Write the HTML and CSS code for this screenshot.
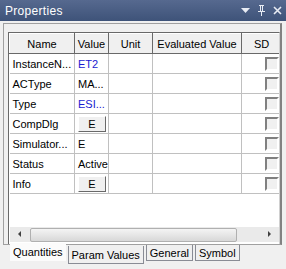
FILE: index.html
```html
<!DOCTYPE html>
<html lang="en">
<head>
    <meta charset="UTF-8">
    <title>Properties</title>
    <link rel="stylesheet" href="styles.css">
</head>
<body>
    <div class="titlebar">
        <span class="title">Properties</span>
        <div class="tools">
            <svg width="9" height="6" viewBox="0 0 9 6"><path d="M0 0h9L4.5 5z" fill="#e8ecf4"/></svg>
            <svg width="9" height="11" viewBox="0 0 9 11"><path d="M2 0h5v1H6v5h2v1H5v4H4V7H1V6h2V1H2z M4 1v5h1V1z" fill="#e8ecf4"/></svg>
            <svg width="9" height="9" viewBox="0 0 9 9"><path d="M1 1l7 7M8 1l-7 7" stroke="#e8ecf4" stroke-width="1.6"/></svg>
        </div>
    </div>

    <div class="frame">
        <div class="grid">
            <table>
                <thead>
                    <tr>
                        <th class="c-name">Name</th>
                        <th class="c-value">Value</th>
                        <th class="c-unit">Unit</th>
                        <th class="c-eval">Evaluated Value</th>
                        <th class="c-sd">SD</th>
                    </tr>
                </thead>
                <tbody>
                    <tr><td>InstanceN...</td><td class="blue">ET2</td><td></td><td></td><td class="chk"><span class="box"></span></td></tr>
                    <tr><td>ACType</td><td>MA...</td><td></td><td></td><td class="chk"><span class="box"></span></td></tr>
                    <tr><td>Type</td><td class="blue">ESI...</td><td></td><td></td><td class="chk"><span class="box"></span></td></tr>
                    <tr><td>CompDlg</td><td class="btn-cell"><span class="btn">E</span></td><td></td><td></td><td class="chk"><span class="box"></span></td></tr>
                    <tr><td>Simulator...</td><td>E</td><td></td><td></td><td class="chk"><span class="box"></span></td></tr>
                    <tr><td>Status</td><td>Active</td><td></td><td></td><td class="chk"><span class="box"></span></td></tr>
                    <tr><td>Info</td><td class="btn-cell"><span class="btn">E</span></td><td></td><td></td><td class="chk"><span class="box"></span></td></tr>
                </tbody>
            </table>
            <div class="filler"></div>
            <div class="hscroll">
                <span class="arrow left"></span>
                <span class="thumb"></span>
                <span class="arrow right"></span>
            </div>
        </div>
    </div>

    <div class="tabs">
        <span class="tab first">Quantities</span>
        <span class="tab active">Param Values</span>
        <span class="tab">General</span>
        <span class="tab">Symbol</span>
    </div>
</body>
</html>
```

FILE: styles.css
```css
* {
    margin: 0;
    padding: 0;
    box-sizing: border-box;
}

body {
    width: 286px;
    height: 269px;
    background-color: #f0f0f0;
    font-family: "Liberation Sans", Arial, sans-serif;
    font-size: 11px;
    color: #000;
    overflow: hidden;
}

.titlebar {
    height: 21px;
    display: flex;
    align-items: center;
    justify-content: space-between;
    padding: 0 4px 0 5px;
    background: linear-gradient(#56698f, #3e5379);
    color: #fff;
}

.title {
    font-size: 12px;
    letter-spacing: 0.3px;
}

.tools {
    display: flex;
    align-items: center;
    gap: 7px;
}

.frame {
    margin: 2px 4px 0 3px;
    height: 222px;
    border: 1px solid #a0a0a0;
    border-right: 2px solid #828282;
    padding: 8px 0 0 4px;
}

.grid {
    height: 212px;
    background-color: #fff;
    border-left: 1px solid #696969;
    border-top: 1px solid #696969;
    border-right: 1px solid #d0d0d0;
    display: flex;
    flex-direction: column;
    overflow: hidden;
}

table {
    border-collapse: collapse;
    table-layout: fixed;
    width: 300px;
}

th {
    height: 20px;
    font-weight: normal;
    background-color: #f0f0f0;
    border-top: 1px solid #fff;
    border-left: 1px solid #fff;
    border-right: 1px solid #696969;
    border-bottom: 1px solid #696969;
    text-align: center;
    padding: 0;
}

.c-name { width: 65px; }
.c-value { width: 34px; }
.c-unit { width: 44px; }
.c-eval { width: 89px; }
.c-sd { width: 68px; text-align: left; padding-left: 12px; }

td {
    height: 20px;
    border: 1px solid #c0c0c0;
    border-top: none;
    padding: 0 0 0 3px;
    white-space: nowrap;
    overflow: hidden;
}

td:first-child {
    border-left: none;
}

.blue {
    color: #1a1ad0;
}

.btn-cell {
    padding: 0 2px 0 3px;
}

.btn {
    display: block;
    height: 16px;
    line-height: 14px;
    text-align: center;
    background-color: #f0f0f0;
    border: 1px solid;
    border-color: #fff #696969 #696969 #fff;
}

.chk {
    padding-left: 23px;
}

.box {
    display: block;
    width: 14px;
    height: 14px;
    background-color: #f0f0f0;
    border: 2px solid;
    border-color: #808080 #fff #fff #808080;
}

.filler {
    flex: 1;
}

.hscroll {
    height: 15px;
    margin: 0 0 2px 1px;
    display: flex;
    align-items: center;
    background-color: #eaeaea;
}

.arrow {
    width: 20px;
    height: 15px;
    position: relative;
}

.arrow::after {
    content: "";
    position: absolute;
    top: 4px;
    border-top: 3px solid transparent;
    border-bottom: 3px solid transparent;
}

.arrow.left::after {
    left: 8px;
    border-right: 3px solid #404040;
}

.arrow.right::after {
    left: 9px;
    border-left: 3px solid #404040;
}

.thumb {
    flex: 1;
    height: 14px;
    margin-right: 22px;
    border: 1px solid #b0b0b0;
    border-radius: 2px;
    background: linear-gradient(#f4f4f4, #d8d8d8);
}

.tabs {
    display: flex;
    align-items: flex-start;
    padding-left: 10px;
    gap: 2px;
}

.tab {
    height: 16px;
    padding: 2px 3px 0;
    font-size: 11px;
    border: 1px solid #898c95;
    border-top: none;
    background-color: #f0f0f0;
}

.tab.first {
    background-color: #fbfbfb;
    border: none;
    height: 18px;
    margin-top: -2px;
    padding-top: 3px;
}

.tab.active {
    height: 18px;
    padding-top: 3px;
    margin-top: 1px;
}
```
